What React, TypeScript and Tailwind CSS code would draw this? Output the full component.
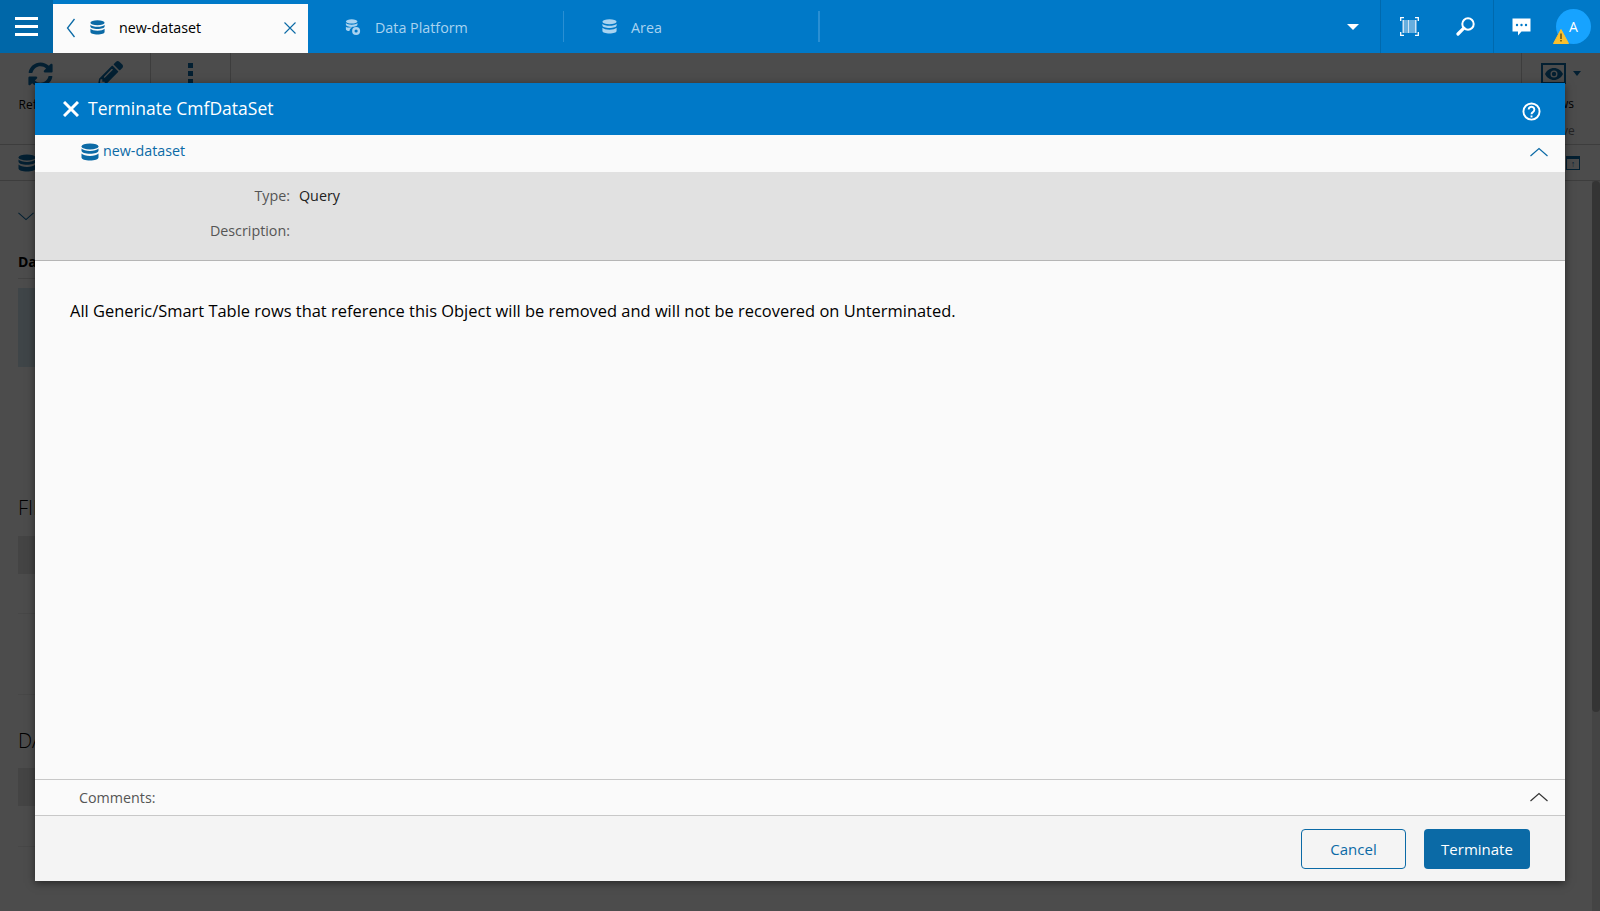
import React from "react";
import { FaSyncAlt, FaPencilAlt } from "react-icons/fa";

function DbIcon({ className }: { className?: string }) {
  return (
    <svg viewBox="0 0 18 18" className={className} fill="currentColor">
      <ellipse cx="9" cy="3.4" rx="8.5" ry="3" />
      <path d="M.5 5.600v2.200c0 1.700 3.800 3 8.500 3s8.500-1.300 8.500-3V5.600c-1.400 1.600-4.800 2.400-8.500 2.400S1.900 7.200.5 5.600z" />
      <path d="M.5 10.600v3.800c0 1.700 3.800 3 8.500 3s8.500-1.300 8.500-3v-3.800c-1.400 1.600-4.800 2.400-8.500 2.400s-7.100-.8-8.500-2.400z" />
    </svg>
  );
}

function DbGearIcon({ className }: { className?: string }) {
  return (
    <svg viewBox="0 0 18 18" className={className} fill="currentColor">
      <ellipse cx="7.500" cy="2.800" rx="6.500" ry="2.400" />
      <path d="M1 4.600v2c0 1.300 2.900 2.400 6.500 2.400S14 7.900 14 6.600v-2C12.900 5.800 10.300 6.400 7.500 6.400S2.100 5.800 1 4.600z" />
      <path d="M1 8.600v2.800c0 1 1.600 1.900 4 2.200.2-2 1.600-3.600 3.500-4.200C5.500 9.600 2.400 9.800 1 8.600z" />
      <circle cx="12.500" cy="13.500" r="4.500" />
      <circle cx="12.500" cy="13.500" r="1.800" fill="#0079c8" />
    </svg>
  );
}

function Chevron({ className, dir }: { className?: string; dir: "up" | "down" }) {
  return (
    <svg viewBox="0 0 18 10" className={className} fill="none" stroke="currentColor" strokeWidth="1.200">
      <path d={dir === "up" ? "M.5 9L9 1.500 17.500 9" : "M.5 1L9 8.500 17.500 1"} />
    </svg>
  );
}

function ThinX({ className }: { className?: string }) {
  return (
    <svg viewBox="0 0 12 12" className={className} fill="none" stroke="currentColor" strokeWidth="1.100">
      <path d="M.5.5l11 11M11.500.5l-11 11" />
    </svg>
  );
}

function BarcodeIcon() {
  return (
    <svg viewBox="0 0 19 19" className="h-[19px] w-[19px]" fill="none">
      <path d="M4 .7H.7V4M15 .7h3.300V4M4 18.300H.7V15M15 18.300h3.300V15" stroke="#fff" strokeWidth="1.300" />
      <path d="M2.500 3h2v13h-2zM5.500 3h1v13h-1zM7.500 3h2v13h-2zM10.500 3h1v13h-1zM12.500 3h1v13h-1zM14.500 3h2v13h-2z" fill="#cfe4f5" />
    </svg>
  );
}

function SearchIcon() {
  return (
    <svg viewBox="0 0 19 19" className="h-[19px] w-[19px]" fill="none" stroke="#fff">
      <circle cx="12" cy="7" r="5.700" strokeWidth="2" />
      <path d="M7.800 11.200l-5.800 5.800" strokeWidth="3.200" strokeLinecap="round" />
    </svg>
  );
}

function ChatIcon() {
  return (
    <svg viewBox="0 0 19 18" className="h-[18px] w-[19px]">
      <path d="M.5.500h18v13h-9L6 17.500v-4H.5z" fill="#fff" />
      <circle cx="5" cy="7" r="1.200" fill="#0079c8" />
      <circle cx="9.500" cy="7" r="1.200" fill="#0079c8" />
      <circle cx="14" cy="7" r="1.200" fill="#0079c8" />
    </svg>
  );
}

function WarningIcon() {
  return (
    <svg viewBox="0 0 16 15" className="h-[15px] w-4">
      <path d="M8 .5l7.500 14H.5z" fill="#fbc02d" strokeLinejoin="round" stroke="#fbc02d" />
      <path d="M7.300 4.500h1.400v5.500H7.300zM7.300 11h1.400v1.500H7.300z" fill="#5a4a10" />
    </svg>
  );
}

function ToolbarBackground() {
  return (
    <div className="flex h-[92px] shrink-0 border-b border-[#ccc] bg-white text-[#0b6aa6]">
      <div className="flex w-[80px] flex-col items-center pt-[9px]">
        <FaSyncAlt className="h-[25px] w-[25px]" />
        <span className="mt-[10px] text-xs text-black">Refresh</span>
      </div>
      <div className="flex w-[71px] flex-col items-center border-r border-[#ccc] pr-[10px] pt-[8px]">
        <FaPencilAlt className="h-[25px] w-[25px]" />
      </div>
      <div className="flex w-[80px] flex-col items-center gap-[3px] border-r border-[#ccc] pt-[10px]">
        <span className="h-[5px] w-[5px] bg-current" />
        <span className="h-[5px] w-[5px] bg-current" />
        <span className="h-[5px] w-[5px] bg-current" />
      </div>
      <div className="flex-1" />
      <div className="flex w-[79px] flex-col items-center border-l border-[#ccc] pt-[10px]">
        <div className="flex items-center gap-[7px]">
          <div className="flex h-[21px] w-[25px] items-center justify-center border-2 border-current">
            <svg viewBox="0 0 18 12" className="h-[12px] w-[18px]" fill="currentColor">
              <path fillRule="evenodd" d="M9 0c4 0 7.300 2.500 9 6-1.700 3.500-5 6-9 6s-7.300-2.500-9-6c1.700-3.500 5-6 9-6zm0 2.500a3.500 3.500 0 1 0 0 7 3.500 3.500 0 0 0 0-7z" />
              <circle cx="9" cy="6" r="2.200" />
            </svg>
          </div>
          <span className="h-0 w-0 border-x-[4px] border-t-[5px] border-x-transparent border-t-current" />
        </div>
        <span className="mt-[12px] ml-[-6px] text-xs text-black">Views</span>
        <span className="mt-[11px] ml-[-6px] text-xs text-[#777]">Active</span>
      </div>
    </div>
  );
}

function PageBackground() {
  return (
    <div className="flex min-h-0 flex-1 flex-col bg-white">
      <ToolbarBackground />
      <div className="flex h-[36px] shrink-0 items-center justify-between border-b border-[#ccc] pl-[18px] pr-[20px] text-[#0b6aa6]">
        <DbIcon className="h-[18px] w-[18px]" />
        <div className="flex h-[14px] w-[14px] items-center justify-center border border-current border-t-[3px] text-[9px] leading-none">↑</div>
      </div>
      <div className="flex flex-1">
        <div className="flex-1 pl-[18px] pt-[31px]">
          <div className="w-[1000px]">
            <Chevron dir="down" className="h-[9px] w-[16px] text-[#0b6aa6]" />
            <div className="mt-[31px] border-b border-[#ddd] pb-[6px] text-sm font-bold text-black">Data</div>
            <div className="mt-[9px] h-[79px] bg-[#d2e6f0]" />
            <div className="mt-[127px] text-xl font-light text-black">FIELDS</div>
            <div className="mt-[14px] h-[38px] bg-[#e4e4e4]" />
            <div className="mt-[39px] border-b border-[#eee]" />
            <div className="mt-[80px] border-b border-[#eee]" />
            <div className="mt-[32px] text-xl font-light text-black">DATA</div>
            <div className="mt-[13px] h-[38px] bg-[#e4e4e4]" />
            <div className="mt-[40px] border-b border-[#eee]" />
          </div>
        </div>
        <div className="w-[8px] bg-[#e3e3e3]">
          <div className="h-[531px] rounded bg-[#aeaeae]" />
        </div>
      </div>
    </div>
  );
}

function TopBar() {
  return (
    <header className="relative z-20 flex h-[53px] shrink-0 bg-[#0079c8] text-[#a9d3f0]">
      <button className="flex w-[53px] flex-col items-center justify-center gap-[5px] bg-[#0067a8]">
        <span className="h-[3px] w-[23px] bg-white" />
        <span className="h-[3px] w-[23px] bg-white" />
        <span className="h-[3px] w-[23px] bg-white" />
      </button>
      <div className="mt-[4px] flex w-[255px] items-center bg-[#fbfbfb] text-black">
        <svg viewBox="0 0 10 20" className="ml-[13px] mb-[2px] h-[20px] w-[10px] text-[#0b6aa6]" fill="none" stroke="currentColor" strokeWidth="1.300">
          <path d="M8.500 1L1.500 10l7 9" />
        </svg>
        <DbIcon className="ml-[14px] mb-[2px] h-[15px] w-[15px] text-[#0b6aa6]" />
        <span className="ml-[14px] mb-[2px] text-[14.300px]">new-dataset</span>
        <ThinX className="ml-auto mr-[12px] mb-[2px] h-[12px] w-[12px] text-[#0b6aa6]" />
      </div>
      <div className="my-[11px] flex w-[256px] items-center border-r border-[#2a8fd3] pl-[37px]">
        <DbGearIcon className="h-[16px] w-[16px]" />
        <span className="ml-[14px] pt-[2px] text-[14.300px]">Data Platform</span>
      </div>
      <div className="my-[11px] flex w-[256px] items-center border-r-2 border-[#2a8fd3] pl-[38px]">
        <DbIcon className="h-[15px] w-[15px]" />
        <span className="ml-[14px] pt-[2px] text-[14.300px]">Area</span>
      </div>
      <div className="flex-1" />
      <div className="flex w-[33px] items-center">
        <span className="h-0 w-0 border-x-[6px] border-t-[6px] border-x-transparent border-t-white" />
      </div>
      <div className="flex w-[113px] items-center border-l border-[#0069ad] pl-[19px]">
        <BarcodeIcon />
        <span className="ml-[37px]">
          <SearchIcon />
        </span>
      </div>
      <div className="flex w-[107px] items-center border-l border-[#0069ad] pl-[18px]">
        <ChatIcon />
        <div className="relative ml-[25px] flex h-[35px] w-[35px] items-center justify-center rounded-full bg-[#17a3ff] text-sm text-white">
          A
          <div className="absolute left-[-3px] top-[20px]">
            <WarningIcon />
          </div>
        </div>
      </div>
    </header>
  );
}

function TerminateModal() {
  return (
    <div className="absolute left-[35px] top-[83px] z-10 flex h-[798px] w-[1530px] flex-col bg-[#fafafa] shadow-[0_2px_8px_rgba(0,0,0,0.5)]">
      <div className="flex h-[52px] shrink-0 items-center bg-[#0079c8] text-white">
        <svg viewBox="0 0 16 16" className="ml-[28px] h-[16px] w-[16px]" fill="none" stroke="currentColor" strokeWidth="3">
          <path d="M1 1l14 14M15 1L1 15" />
        </svg>
        <h1 className="ml-[9px] mb-[2px] text-[17.500px]">Terminate CmfDataSet</h1>
        <svg viewBox="0 0 20 20" className="ml-auto mr-[24px] mt-[4px] h-[19px] w-[19px]" fill="none" stroke="#fff">
          <circle cx="10" cy="10" r="8.500" strokeWidth="2" />
          <path d="M7 8a3 3 0 1 1 4.500 2.600c-1 .6-1.500 1-1.500 2.400" strokeWidth="2" />
          <path d="M10 14.200v2" strokeWidth="2" />
        </svg>
      </div>
      <div className="flex h-[37px] shrink-0 items-center justify-between text-[#0b6aa6]">
        <div className="ml-[46px] flex items-center">
          <DbIcon className="mb-[4px] h-[18px] w-[18px]" />
          <span className="ml-[4px] mb-[5px] text-[14.300px]">new-dataset</span>
        </div>
        <Chevron dir="up" className="mr-[17px] mb-[4px] h-[10px] w-[18px]" />
      </div>
      <dl className="h-[89px] shrink-0 border-b border-[#b5b5b5] bg-[#e1e1e1] pt-[14px] text-[14.300px]">
        <div className="flex h-[20px] items-center">
          <dt className="w-[255px] text-right text-[#555]">Type:</dt>
          <dd className="ml-[9px] text-[#222]">Query</dd>
        </div>
        <div className="mt-[15px] flex h-[20px] items-center">
          <dt className="w-[255px] text-right text-[#555]">Description:</dt>
        </div>
      </dl>
      <p className="flex-1 pl-[35px] pt-[38px] text-[16.440px] leading-6 text-black">
        All Generic/Smart Table rows that reference this Object will be removed and will not be recovered on Unterminated.
      </p>
      <div className="flex h-[37px] shrink-0 items-center justify-between border-y border-[#c8c8c8]">
        <span className="ml-[44px] text-[14.300px] text-[#555]">Comments:</span>
        <Chevron dir="up" className="mr-[17px] mb-[2px] h-[10px] w-[18px] text-[#333]" />
      </div>
      <div className="flex h-[65px] shrink-0 items-center justify-end gap-[18px] bg-[#f4f4f4] pr-[35px]">
        <button className="h-[40px] w-[105px] rounded border border-[#0b6aa6] pt-[2px] text-[15px] text-[#0b6aa6]">Cancel</button>
        <button className="h-[40px] w-[106px] rounded bg-[#0b6aa6] pt-[2px] text-[15px] text-white">Terminate</button>
      </div>
    </div>
  );
}

export default function App() {
  return (
    <div className="relative flex h-[911px] w-[1600px] flex-col overflow-hidden font-['Open_Sans',sans-serif]">
      <TopBar />
      <PageBackground />
      <div className="absolute inset-0 z-[5] bg-black/70" />
      <TerminateModal />
    </div>
  );
}
